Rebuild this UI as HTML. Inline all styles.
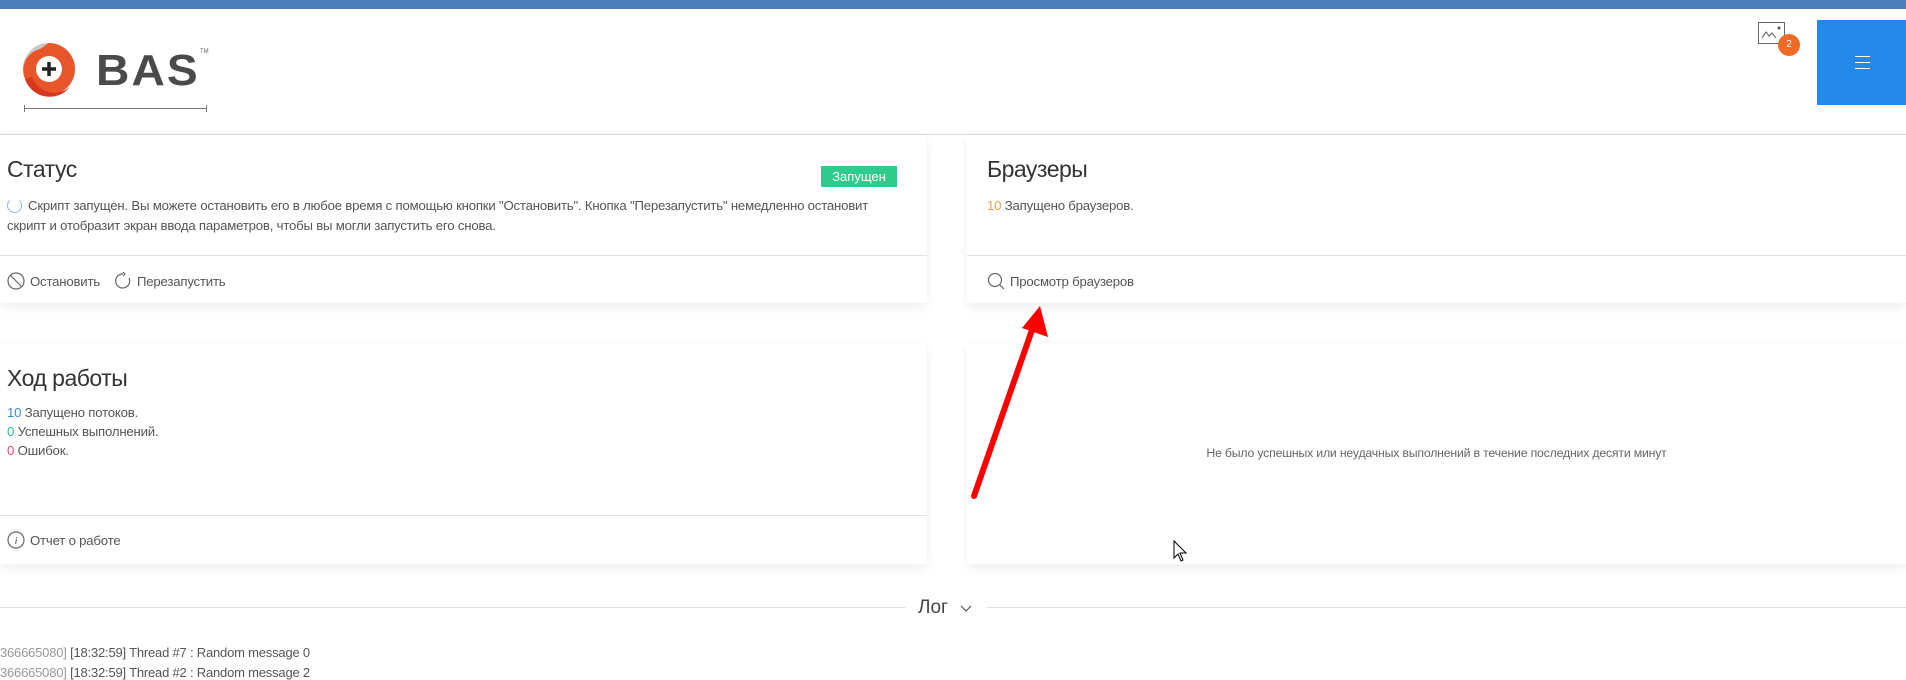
<!DOCTYPE html>
<html><head><meta charset="utf-8"><style>
*{margin:0;padding:0;box-sizing:border-box}
body{width:1906px;height:671px;overflow:hidden;background:#fff;font-family:"Liberation Sans",sans-serif;color:#555;position:relative}
.abs{position:absolute}
.card{position:absolute;background:#fff;box-shadow:0 4px 10px rgba(0,0,0,0.07)}
.title{position:absolute;font-size:23px;color:#333;letter-spacing:-0.5px}
.txt{position:absolute;font-size:13.2px;color:#555;white-space:nowrap;letter-spacing:-0.2px}
.div{position:absolute;left:0;right:0;height:1px;background:#e3e3e3}
</style></head><body>
<div class="abs" style="left:0;top:0;width:1906px;height:9px;background:#4b7dbd"></div>
<div class="abs" style="left:0;top:134px;width:1906px;height:1px;background:#d8d8d8"></div>
<!-- logo -->
<svg class="abs" style="left:20px;top:41px" width="60" height="58" viewBox="0 0 60 58">
<circle cx="29" cy="28" r="26" fill="#e8552b"/>
<path d="M29 2 A26 26 0 0 0 5 38 A22 22 0 0 1 20 8 Z" fill="#c9c9c9"/>
<path d="M5 38 A26 26 0 0 0 50 46 A24 24 0 0 1 12 36 Z" fill="#d8361f"/>
<circle cx="29" cy="28" r="13" fill="#fff"/>
<path d="M29 21v14M22 28h14" stroke="#222" stroke-width="3.5"/>
</svg>
<div class="abs" style="left:96px;top:46px;font-size:44px;font-weight:bold;color:#4a4a4c;letter-spacing:2px;transform:scaleX(1.05);transform-origin:left">BAS</div>
<div class="abs" style="left:200px;top:49px;font-size:6px;color:#666">TM</div>
<div class="abs" style="left:24px;top:108px;width:183px;height:1px;background:#777"></div>
<div class="abs" style="left:24px;top:105px;width:1px;height:7px;background:#777"></div>
<div class="abs" style="left:206px;top:105px;width:1px;height:7px;background:#777"></div>
<!-- top right -->
<svg class="abs" style="left:1758px;top:22px" width="28" height="24" viewBox="0 0 28 24"><rect x="0.5" y="0.5" width="26" height="21" fill="#fff" stroke="#666"/><path d="M4 16l4-6 3 4 3-3 4 5" fill="none" stroke="#555"/><circle cx="21" cy="6" r="1.5" fill="#555"/></svg>
<div class="abs" style="left:1778px;top:34px;width:22px;height:22px;border-radius:50%;background:#ef6a25;color:#fff;font-size:10px;text-align:center;line-height:22px">2</div>
<div class="abs" style="left:1817px;top:20px;width:89px;height:85px;background:#2389e9"></div>
<div class="abs" style="left:1855px;top:56px;width:15px;height:1px;background:#fff;box-shadow:0 6px 0 #fff,0 12px 0 #fff"></div>
<!-- Status card -->
<div class="card" style="left:0;top:135px;width:927px;height:168px">
<div class="title" style="left:7px;top:21px">Статус</div>
<div class="abs" style="left:821px;top:31px;width:76px;height:21px;background:#2ecb8d;color:#fff;font-size:13px;text-align:center;line-height:21px">Запущен</div>
<div class="abs" style="left:7px;top:63px;width:15px;height:15px;border:1.5px solid #8ab6e6;border-radius:50%;border-top-color:transparent"></div>
<div class="txt" style="left:28px;top:63px">Скрипт запущен. Вы можете остановить его в любое время с помощью кнопки "Остановить". Кнопка "Перезапустить" немедленно остановит</div>
<div class="txt" style="left:7px;top:83px">скрипт и отобразит экран ввода параметров, чтобы вы могли запустить его снова.</div>
<div class="div" style="top:120px"></div>
<svg class="abs" style="left:7px;top:137px" width="18" height="18"><circle cx="9" cy="9" r="8" fill="none" stroke="#666" stroke-width="1.2"/><path d="M3.5 3.5l11 11" stroke="#666" stroke-width="1.2"/></svg>
<div class="txt" style="left:30px;top:139px">Остановить</div>
<svg class="abs" style="left:114px;top:137px" width="18" height="18"><path d="M9 2A7 7 0 1 0 15 6" fill="none" stroke="#666" stroke-width="1.2"/><path d="M9 0l2 2-2 2" fill="none" stroke="#666" stroke-width="1.2"/></svg>
<div class="txt" style="left:137px;top:139px">Перезапустить</div>
</div>
<!-- Browsers card -->
<div class="card" style="left:967px;top:135px;width:939px;height:168px">
<div class="title" style="left:20px;top:21px">Браузеры</div>
<div class="txt" style="left:20px;top:63px"><span style="color:#e8a053">10</span> Запущено браузеров.</div>
<div class="div" style="top:120px"></div>
<svg class="abs" style="left:20px;top:137px" width="18" height="18"><circle cx="8" cy="8" r="6.5" fill="none" stroke="#666" stroke-width="1.2"/><path d="M12.5 12.5l4.5 4.5" stroke="#666" stroke-width="1.2"/></svg>
<div class="txt" style="left:43px;top:139px">Просмотр браузеров</div>
</div>
<!-- Progress card -->
<div class="card" style="left:0;top:344px;width:927px;height:220px">
<div class="title" style="left:7px;top:21px">Ход работы</div>
<div class="txt" style="left:7px;top:61px"><span style="color:#3b8bd8">10</span> Запущено потоков.</div>
<div class="txt" style="left:7px;top:80px"><span style="color:#2ebd8a">0</span> Успешных выполнений.</div>
<div class="txt" style="left:7px;top:99px"><span style="color:#e24b6b">0</span> Ошибок.</div>
<div class="div" style="top:171px"></div>
<svg class="abs" style="left:7px;top:187px" width="18" height="18"><circle cx="9" cy="9" r="8" fill="none" stroke="#666" stroke-width="1.2"/><text x="9" y="13" font-size="11" font-style="italic" text-anchor="middle" fill="#555" font-family="Liberation Serif">i</text></svg>
<div class="txt" style="left:30px;top:189px">Отчет о работе</div>
</div>
<!-- Chart card -->
<div class="card" style="left:967px;top:344px;width:939px;height:220px">
<div class="txt" style="left:0;right:0;top:102px;text-align:center;font-size:12.3px;color:#666">Не было успешных или неудачных выполнений в течение последних десяти минут</div>
</div>
<!-- Log -->
<div class="abs" style="left:0;top:607px;width:906px;height:1px;background:#e0e0e0"></div>
<div class="abs" style="left:987px;top:607px;width:919px;height:1px;background:#e0e0e0"></div>
<div class="abs" style="left:918px;top:597px;font-size:19px;color:#444">Лог</div>
<svg class="abs" style="left:960px;top:605px" width="12" height="8"><path d="M1 1l5 5 5-5" fill="none" stroke="#555" stroke-width="1.2"/></svg>
<div class="txt" style="left:0;top:645px;font-size:13px"><span style="color:#999">366665080]</span> [18:32:59] Thread #7 : Random message 0</div>
<div class="txt" style="left:0;top:665px;font-size:13px"><span style="color:#999">366665080]</span> [18:32:59] Thread #2 : Random message 2</div>
<!-- arrow -->
<svg class="abs" style="left:0;top:0" width="1906" height="671" viewBox="0 0 1906 671">
<path d="M974 496L1032 330" stroke="#f00" stroke-width="6" stroke-linecap="round"/>
<path d="M1040 306L1048 337L1022 328Z" fill="#f00"/>
<path d="M1174 541v17l4-4 3 7 2-1-3-7h6z" fill="#fff" stroke="#000" stroke-width="1"/>
</svg>
</body></html>
